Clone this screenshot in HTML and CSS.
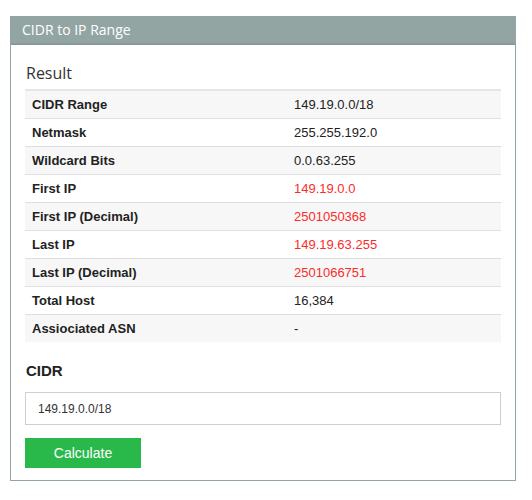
FILE: index.html
```html
<!DOCTYPE html>
<html lang="en">
<head>
    <meta charset="UTF-8">
    <meta name="viewport" content="width=device-width, initial-scale=1.0">
    <title>CIDR to IP Range</title>
    <link rel="stylesheet" href="styles.css">
</head>
<body>
    <div class="panel">
        <div class="panel-heading">CIDR to IP Range</div>
        <div class="panel-body">
            <h3 class="result-title">Result</h3>
            <table class="result-table">
                <tr><th>CIDR Range</th><td>149.19.0.0/18</td></tr>
                <tr><th>Netmask</th><td>255.255.192.0</td></tr>
                <tr><th>Wildcard Bits</th><td>0.0.63.255</td></tr>
                <tr><th>First IP</th><td class="ip">149.19.0.0</td></tr>
                <tr><th>First IP (Decimal)</th><td class="ip">2501050368</td></tr>
                <tr><th>Last IP</th><td class="ip">149.19.63.255</td></tr>
                <tr><th>Last IP (Decimal)</th><td class="ip">2501066751</td></tr>
                <tr><th>Total Host</th><td>16,384</td></tr>
                <tr><th>Assiociated ASN</th><td>-</td></tr>
            </table>
            <form class="cidr-form" onsubmit="return false;">
                <label class="form-label" for="cidr">CIDR</label>
                <input class="form-input" id="cidr" type="text" value="149.19.0.0/18">
                <button class="btn-calc" type="submit">Calculate</button>
            </form>
        </div>
    </div>
</body>
</html>
```

FILE: styles.css
```css
body {
    margin: 0;
    padding: 16px 16px 0 10px;
    background-color: #fff;
    font-family: 'Liberation Sans', Arial, sans-serif;
    font-size: 13px;
    color: #222;
}
.panel {
    width: 504px;
    border: 1px solid #93a5a3;
    border-top: none;
    background-color: #fff;
}
.panel-heading {
    background-color: #93a5a3;
    border-bottom: 2px solid #87999a;
    color: #fff;
    font-family: 'Open Sans', sans-serif;
    font-size: 14px;
    height: 27px;
    line-height: 27px;
    padding-left: 11px;
}
.panel-body {
    padding: 19px 14px 12px 14px;
}
.result-title {
    margin: 0 0 7px 1px;
    font-family: 'Open Sans', sans-serif;
    font-weight: normal;
    font-size: 16px;
    color: #333;
    line-height: 18px;
}
.result-table {
    width: 100%;
    border-collapse: collapse;
    border-top: 2px solid #e6e6e6;
}
.result-table th,
.result-table td {
    text-align: left;
    height: 27px;
    padding: 0 0 0 7px;
    border-bottom: 1px solid #e0e0e0;
}
.result-table th {
    width: 255px;
    font-weight: bold;
    color: #222;
}
.result-table tr:nth-child(odd) {
    background-color: #f7f7f7;
}
.result-table tr:last-child th,
.result-table tr:last-child td {
    border-bottom: none;
}
.result-table .ip {
    color: #fb2b2b;
}
.cidr-form {
    margin-top: 20px;
}
.form-label {
    display: block;
    font-weight: bold;
    font-size: 15px;
    margin: 0 0 12px 1px;
    line-height: 18px;
}
.form-input {
    display: block;
    box-sizing: border-box;
    width: 100%;
    height: 33px;
    border: 1px solid #cfcfcf;
    padding: 0 12px;
    font-family: 'Liberation Sans', Arial, sans-serif;
    font-size: 12px;
    color: #333;
    margin-bottom: 13px;
}
.btn-calc {
    width: 116px;
    height: 30px;
    border: none;
    background-color: #29b94b;
    color: #fff;
    font-family: 'Liberation Sans', Arial, sans-serif;
    font-size: 14px;
    cursor: pointer;
}
```
